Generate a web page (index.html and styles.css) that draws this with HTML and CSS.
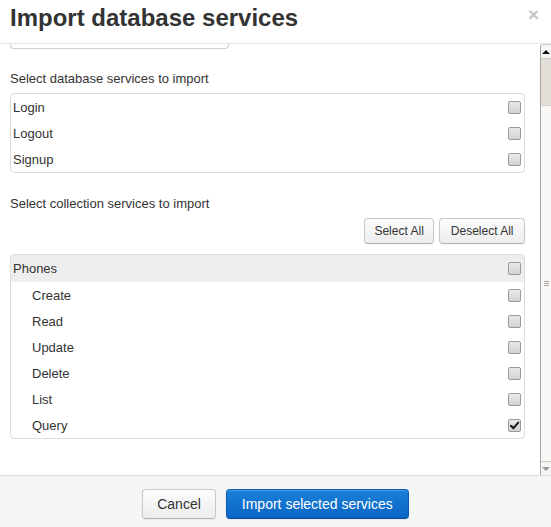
FILE: index.html
```
<!DOCTYPE html>
<html>
<head>
<meta charset="utf-8">
<link rel="stylesheet" href="styles.css">
</head>
<body>
<div class="modal">
  <div class="modal-header">
    <h3 class="title">Import database services</h3>
    <span class="close">×</span>
  </div>
  <div class="modal-body">
    <div class="content">
      <div class="input-stub"></div>
      <p class="label first">Select database services to import</p>
      <div class="list">
        <div class="row"><span class="name">Login</span><span class="cb"></span></div>
        <div class="row"><span class="name">Logout</span><span class="cb"></span></div>
        <div class="row"><span class="name">Signup</span><span class="cb"></span></div>
      </div>
      <p class="label second">Select collection services to import</p>
      <div class="btn-row">
        <button class="btn small">Select All</button>
        <button class="btn small">Deselect All</button>
      </div>
      <div class="list">
        <div class="row head"><span class="name">Phones</span><span class="cb"></span></div>
        <div class="row sub"><span class="name">Create</span><span class="cb"></span></div>
        <div class="row sub"><span class="name">Read</span><span class="cb"></span></div>
        <div class="row sub"><span class="name">Update</span><span class="cb"></span></div>
        <div class="row sub"><span class="name">Delete</span><span class="cb"></span></div>
        <div class="row sub"><span class="name">List</span><span class="cb"></span></div>
        <div class="row sub"><span class="name">Query</span><span class="cb checked"><svg viewBox="0 0 13 13" width="13" height="13"><path d="M3 6.8 L5.4 9.2 L10.2 3.6" fill="none" stroke="#222" stroke-width="2.2" stroke-linecap="round" stroke-linejoin="round"/></svg></span></div>
      </div>
    </div>
    <div class="scrollbar">
      <div class="arrow up"><span class="tri-up"></span></div>
      <div class="track"></div>
      <div class="thumb"><span class="grip"></span><span class="grip"></span><span class="grip"></span></div>
      <div class="arrow down"><span class="tri-down"></span></div>
    </div>
  </div>
  <div class="modal-footer">
    <button class="btn big">Cancel</button>
    <button class="btn big primary">Import selected services</button>
  </div>
</div>
</body>
</html>
```
FILE: styles.css
```
html, body {
  margin: 0;
  padding: 0;
  background: #fff;
}
body {
  font-family: "Liberation Sans", Arial, sans-serif;
  color: #333;
  width: 551px;
  height: 527px;
  overflow: hidden;
}
.modal {
  display: flex;
  flex-direction: column;
  height: 527px;
}
.modal-header {
  height: 43px;
  border-bottom: 1px solid #e5e5e5;
  display: flex;
  justify-content: space-between;
  align-items: flex-start;
  padding-left: 10px;
}
.title {
  margin: 0;
  font-size: 24px;
  font-weight: bold;
  line-height: 36px;
  color: #333;
}
.close {
  font-size: 19px;
  font-weight: bold;
  line-height: 20px;
  color: #c4c4c4;
  margin-top: 5px;
  margin-right: 12px;
}
.modal-body {
  height: 431px;
  display: flex;
}
.content {
  flex: 1;
  overflow: hidden;
  padding: 0 15px 0 10px;
}
.input-stub {
  width: 217px;
  height: 4px;
  border: 1px solid #cfcfcf;
  border-top: none;
  border-radius: 0 0 4px 4px;
}
.label {
  margin: 0;
  font-size: 13px;
  line-height: 18px;
}
.label.first {
  margin-top: 21px;
  margin-bottom: 5px;
}
.label.second {
  margin-top: 22px;
  margin-bottom: 5px;
}
.list {
  border: 1px solid #dcdcdc;
  border-radius: 4px;
  overflow: hidden;
}
.row {
  height: 26px;
  display: flex;
  align-items: center;
  justify-content: space-between;
  padding: 0 3px 0 2px;
  font-size: 13px;
}
.row.head {
  background: #eee;
  height: 27px;
}
.row.sub {
  padding-left: 21px;
}
.cb {
  width: 11px;
  height: 11px;
  border: 1px solid #9a9a9a;
  border-radius: 2px;
  background: linear-gradient(#e9e9e9, #d3d3d3);
  position: relative;
}
.cb.checked svg {
  position: absolute;
  left: -1px;
  top: -1px;
}
.btn-row {
  display: flex;
  justify-content: flex-end;
  gap: 5px;
  margin-bottom: 10px;
}
.btn {
  font-family: "Liberation Sans", Arial, sans-serif;
  color: #333;
  border: 1px solid #c8c8c8;
  border-bottom-color: #b3b3b3;
  border-radius: 4px;
  background: linear-gradient(#fdfdfd, #ececec);
  box-shadow: inset 0 1px 0 rgba(255,255,255,.2), 0 1px 2px rgba(0,0,0,.05);
  cursor: pointer;
}
.btn.small {
  font-size: 12px;
  height: 26px;
  padding: 0 9.5px;
}
.btn.small:last-child {
  padding: 0 10.5px;
}
.btn.big {
  font-size: 14px;
  height: 30px;
  padding: 0 14px;
}
.btn.big.primary {
  padding: 0 15px;
  color: #fff;
  background: linear-gradient(#1a80d9, #0965c4);
  border-color: #0a5cb5;
  border-bottom-color: #074c98;
}
.scrollbar {
  width: 10px;
  border-left: 1px solid #aaa6a0;
  border-top: 1px solid #cfcbc5;
  border-top-left-radius: 3px;
  display: flex;
  flex-direction: column;
  background: #faf9f7;
}
.arrow {
  height: 13px;
  background: #f6f5f3;
  display: flex;
  align-items: center;
  justify-content: center;
}
.arrow.up {
  border-bottom: 1px solid #cac6c0;
  border-top-left-radius: 3px;
}
.arrow.down {
  border-top: 1px solid #cac6c0;
}
.tri-up {
  width: 0;
  height: 0;
  border-left: 4px solid transparent;
  border-right: 4px solid transparent;
  border-bottom: 4px solid #111;
}
.tri-down {
  width: 0;
  height: 0;
  border-left: 4px solid transparent;
  border-right: 4px solid transparent;
  border-top: 4px solid #9a9a9a;
}
.track {
  height: 46px;
  background: #e3ded7;
  border-bottom: 1px solid #d5d0c9;
}
.thumb {
  flex: 1;
  background: #f9f8f6;
  display: flex;
  flex-direction: column;
  align-items: center;
  justify-content: center;
  gap: 1px;
}
.grip {
  width: 5px;
  height: 1px;
  background: #a9a5a0;
}
.modal-footer {
  flex: 1;
  background: #f5f5f5;
  border-top: 1px solid #ddd;
  display: flex;
  justify-content: center;
  align-items: flex-start;
  gap: 10px;
  padding-top: 13px;
}
```
